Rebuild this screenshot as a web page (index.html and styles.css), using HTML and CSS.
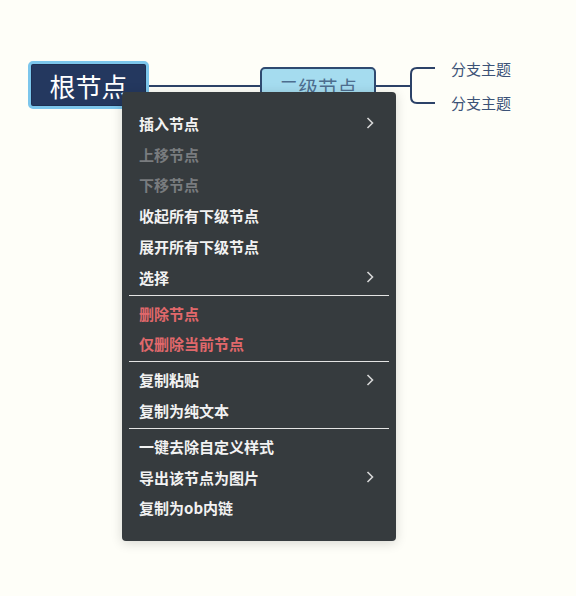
FILE: index.html
```html
<!DOCTYPE html>
<html>
  <head>
    <link rel="stylesheet" href="styles.css">
  </head>
  <body>
    <div class="canvas">
      <svg class="links" width="576" height="596" viewBox="0 0 576 596" fill="none">
        <line x1="148" y1="86" x2="261" y2="86"></line>
        <line x1="374" y1="86" x2="411" y2="86"></line>
        <path d="M435 68H417Q411 68 411 74V97Q411 103 417 103H435"></path>
      </svg>

      <div class="node root-node">根节点</div>
      <div class="node second-node">二级节点</div>
      <div class="node branch-node branch-top">分支主题</div>
      <div class="node branch-node branch-bottom">分支主题</div>

      <div class="context-menu">
        <div class="menu-item">
          <span>插入节点</span>
          <svg class="chevron" viewBox="0 0 8 12" fill="none">
            <polyline points="1.5 1 6.5 6 1.5 11"></polyline>
          </svg>
        </div>
        <div class="menu-item disabled"><span>上移节点</span></div>
        <div class="menu-item disabled"><span>下移节点</span></div>
        <div class="menu-item"><span>收起所有下级节点</span></div>
        <div class="menu-item"><span>展开所有下级节点</span></div>
        <div class="menu-item">
          <span>选择</span>
          <svg class="chevron" viewBox="0 0 8 12" fill="none">
            <polyline points="1.5 1 6.5 6 1.5 11"></polyline>
          </svg>
        </div>
        <div class="menu-divider"></div>
        <div class="menu-item danger"><span>删除节点</span></div>
        <div class="menu-item danger"><span>仅删除当前节点</span></div>
        <div class="menu-divider"></div>
        <div class="menu-item">
          <span>复制粘贴</span>
          <svg class="chevron" viewBox="0 0 8 12" fill="none">
            <polyline points="1.5 1 6.5 6 1.5 11"></polyline>
          </svg>
        </div>
        <div class="menu-item"><span>复制为纯文本</span></div>
        <div class="menu-divider"></div>
        <div class="menu-item"><span>一键去除自定义样式</span></div>
        <div class="menu-item">
          <span>导出该节点为图片</span>
          <svg class="chevron" viewBox="0 0 8 12" fill="none">
            <polyline points="1.5 1 6.5 6 1.5 11"></polyline>
          </svg>
        </div>
        <div class="menu-item"><span>复制为ob内链</span></div>
      </div>
    </div>
  </body>
</html>
```

FILE: styles.css
```css
* {
  margin: 0;
  padding: 0;
  box-sizing: border-box;
}

body {
  width: 576px;
  height: 596px;
  overflow: hidden;
  background: #fefef8;
  font-family: "Noto Sans CJK SC", "Noto Sans", sans-serif;
}

.canvas {
  position: relative;
  width: 576px;
  height: 596px;
}

.links {
  position: absolute;
  top: 0;
  left: 0;
}

.links line,
.links path {
  stroke: #2c4268;
  stroke-width: 2;
}

.node {
  position: absolute;
  display: flex;
  align-items: center;
  justify-content: center;
  white-space: nowrap;
}

.root-node {
  left: 28px;
  top: 61px;
  width: 121px;
  height: 48px;
  border: 3px solid #7cc6ec;
  border-radius: 5px;
  background: #24385f;
  box-shadow: inset 0 0 0 1px #1d2f52;
  color: #ffffff;
  font-size: 26px;
}

.second-node {
  left: 260px;
  top: 67px;
  width: 116px;
  height: 38px;
  border: 2px solid #2f4a70;
  border-radius: 5px;
  background: #a5dcef;
  color: #4d6d8e;
  font-size: 19.5px;
}

.branch-node {
  left: 451px;
  height: 20px;
  color: #3b5277;
  font-size: 15px;
}

.branch-top {
  top: 58px;
}

.branch-bottom {
  top: 92px;
}

.context-menu {
  position: absolute;
  left: 122px;
  top: 92px;
  width: 274px;
  height: 449px;
  padding: 16px 7px 0;
  background: #363b3e;
  border-radius: 4px;
  box-shadow: 0 2px 12px rgba(0, 0, 0, 0.16);
}

.menu-item {
  display: flex;
  align-items: center;
  justify-content: space-between;
  height: 30.8px;
  padding: 0 15px 0 10px;
  color: #f2f2f2;
  font-size: 15px;
  font-weight: bold;
}

.menu-item.disabled {
  color: #797c7f;
}

.menu-item.danger {
  color: #e0686b;
}

.chevron {
  width: 8px;
  height: 12px;
  stroke: #d6d6d6;
  stroke-width: 1.6;
}

.menu-divider {
  height: 1px;
  margin: 2px 0;
  background: #e4e4e4;
}
```
